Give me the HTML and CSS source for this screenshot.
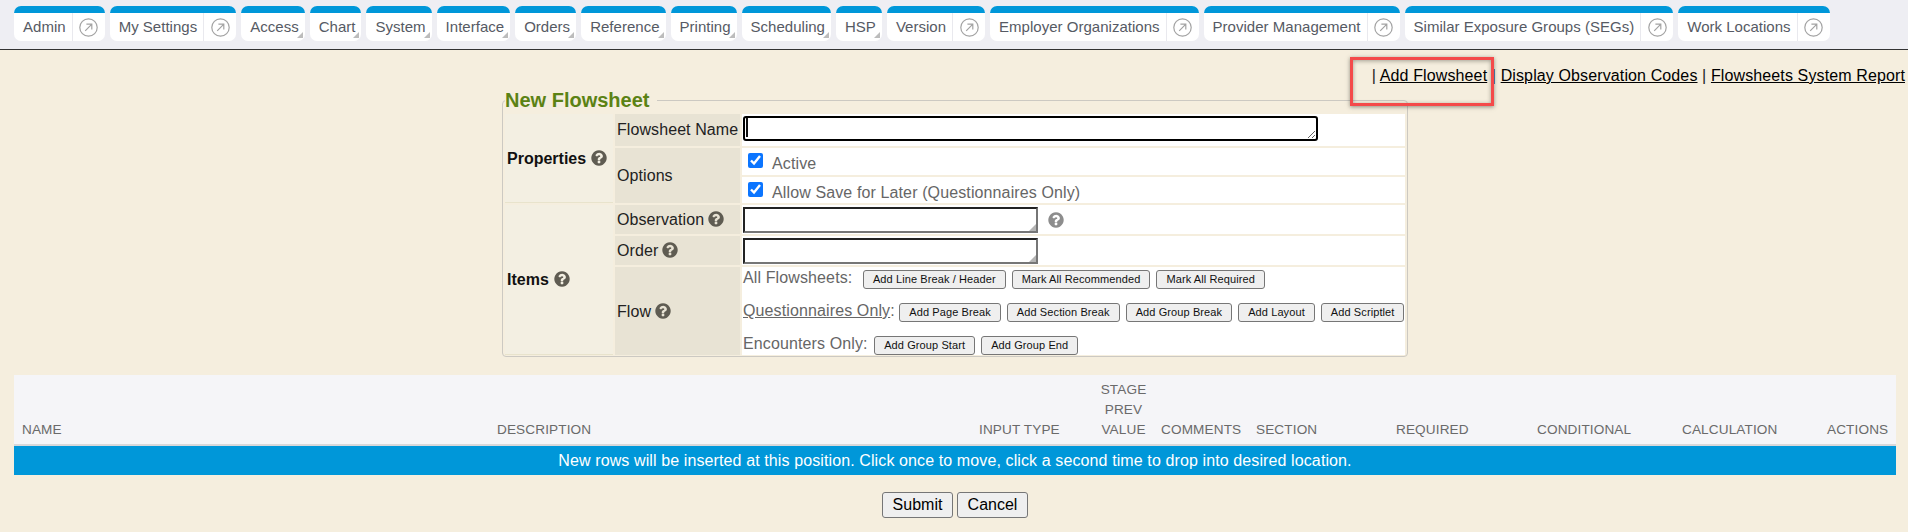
FILE: index.html
```html
<!DOCTYPE html>
<html lang="en">
<head>
<meta charset="utf-8">
<title>New Flowsheet</title>
<link rel="stylesheet" href="styles.css">
</head>
<body>
<svg class="defs" width="0" height="0" aria-hidden="true">
  <symbol id="ext" viewBox="0 0 19 19">
    <circle cx="9.5" cy="9.5" r="8.7" fill="none" stroke="currentColor" stroke-width="1.2"/>
    <path d="M6.2 12.8 12.6 6.4M7.4 6.2h5.4v5.4" fill="none" stroke="currentColor" stroke-width="1.2"/>
  </symbol>
  <symbol id="help" viewBox="0 0 1792 1792">
    <path fill="currentColor" d="M1024 1376v-192q0-14-9-23t-23-9h-192q-14 0-23 9t-9 23v192q0 14 9 23t23 9h192q14 0 23-9t9-23zm256-672q0-88-55.5-163t-138.5-116-170-41q-243 0-371 213-15 24 8 42l132 100q7 6 19 6 16 0 25-12 53-68 86-92 34-24 86-24 48 0 85.5 26t37.5 59q0 38-20 61t-68 45q-63 28-115.5 86.5t-52.5 125.5v36q0 14 9 23t23 9h192q14 0 23-9t9-23q0-19 21.5-49.5t54.5-49.5q32-18 49-28.5t46-35 44.5-48 28-60.5 12.5-81zm384 192q0 209-103 385.5t-279.5 279.5-385.5 103-385.5-103-279.5-279.5-103-385.5 103-385.5 279.5-279.5 385.5-103 385.5 103 279.5 279.5 103 385.5z"/>
  </symbol>
</svg>

<nav class="nav">
  <div class="tab"><span class="tab-label">Admin</span><span class="tab-ext"><svg class="ext-icon"><use href="#ext"/></svg></span></div>
  <div class="tab"><span class="tab-label">My Settings</span><span class="tab-ext"><svg class="ext-icon"><use href="#ext"/></svg></span></div>
  <div class="tab tab-menu"><span class="tab-label">Access</span></div>
  <div class="tab tab-menu"><span class="tab-label">Chart</span></div>
  <div class="tab tab-menu"><span class="tab-label">System</span></div>
  <div class="tab tab-menu"><span class="tab-label">Interface</span></div>
  <div class="tab tab-menu"><span class="tab-label">Orders</span></div>
  <div class="tab tab-menu"><span class="tab-label">Reference</span></div>
  <div class="tab tab-menu"><span class="tab-label">Printing</span></div>
  <div class="tab tab-menu"><span class="tab-label">Scheduling</span></div>
  <div class="tab tab-menu"><span class="tab-label">HSP</span></div>
  <div class="tab"><span class="tab-label">Version</span><span class="tab-ext"><svg class="ext-icon"><use href="#ext"/></svg></span></div>
  <div class="tab"><span class="tab-label">Employer Organizations</span><span class="tab-ext"><svg class="ext-icon"><use href="#ext"/></svg></span></div>
  <div class="tab"><span class="tab-label">Provider Management</span><span class="tab-ext"><svg class="ext-icon"><use href="#ext"/></svg></span></div>
  <div class="tab"><span class="tab-label">Similar Exposure Groups (SEGs)</span><span class="tab-ext"><svg class="ext-icon"><use href="#ext"/></svg></span></div>
  <div class="tab"><span class="tab-label">Work Locations</span><span class="tab-ext"><svg class="ext-icon"><use href="#ext"/></svg></span></div>
</nav>

<div class="links">
  <span class="highlighted">| <a href="#">Add Flowsheet</a></span>&nbsp;| <a href="#">Display Observation Codes</a> | <a href="#">Flowsheets System Report</a>
</div>

<fieldset class="form-set">
  <legend class="form-title">New Flowsheet</legend>
  <table class="form-table">
    <colgroup><col class="col-a"><col class="col-b"><col class="col-c"></colgroup>
    <tr class="r-name">
      <td class="group" rowspan="3">Properties <svg class="help"><use href="#help"/></svg></td>
      <td class="label">Flowsheet Name</td>
      <td class="field name-cell">
        <div class="name-wrap"><textarea class="name-input" aria-label="Flowsheet Name"></textarea><span class="caret"></span></div>
      </td>
    </tr>
    <tr class="r-opt1">
      <td class="label" rowspan="2">Options</td>
      <td class="field"><label class="check"><input type="checkbox" checked><span class="check-text">Active</span></label></td>
    </tr>
    <tr class="r-opt2">
      <td class="field"><label class="check"><input type="checkbox" checked><span class="check-text">Allow Save for Later (Questionnaires Only)</span></label></td>
    </tr>
    <tr class="r-box">
      <td class="group" rowspan="3">Items <svg class="help"><use href="#help"/></svg></td>
      <td class="label">Observation <svg class="help"><use href="#help"/></svg></td>
      <td class="field"><div class="box-row"><div class="box"></div><svg class="help help-light"><use href="#help"/></svg></div></td>
    </tr>
    <tr class="r-box">
      <td class="label">Order <svg class="help"><use href="#help"/></svg></td>
      <td class="field"><div class="box-row"><div class="box"></div></div></td>
    </tr>
    <tr class="r-flow">
      <td class="label">Flow <svg class="help"><use href="#help"/></svg></td>
      <td class="field flow">
        <div class="flow-row"><span>All Flowsheets:</span>
          <button class="mini first-all">Add Line Break / Header</button><button class="mini">Mark All Recommended</button><button class="mini">Mark All Required</button></div>
        <div class="flow-row"><span><u>Questionnaires Only</u>:</span>
          <button class="mini first-quest">Add Page Break</button><button class="mini">Add Section Break</button><button class="mini">Add Group Break</button><button class="mini">Add Layout</button><button class="mini">Add Scriptlet</button></div>
        <div class="flow-row"><span>Encounters Only:</span>
          <button class="mini first-enc">Add Group Start</button><button class="mini">Add Group End</button></div>
      </td>
    </tr>
  </table>
</fieldset>

<table class="rows">
  <colgroup>
    <col class="c1"><col class="c2"><col class="c3"><col class="c4"><col class="c5"><col class="c6"><col class="c7"><col class="c8"><col class="c9"><col class="c10">
  </colgroup>
  <thead>
    <tr>
      <th>NAME</th><th>DESCRIPTION</th><th>INPUT TYPE</th><th class="stack">STAGE<br>PREV<br>VALUE</th><th>COMMENTS</th><th>SECTION</th><th>REQUIRED</th><th>CONDITIONAL</th><th>CALCULATION</th><th>ACTIONS</th>
    </tr>
  </thead>
  <tbody>
    <tr><td class="insert" colspan="10">New rows will be inserted at this position. Click once to move, click a second time to drop into desired location.</td></tr>
  </tbody>
</table>

<div class="actions">
  <button class="action">Submit</button>
  <button class="action">Cancel</button>
</div>
</body>
</html>
```
FILE: styles.css
```css
* { box-sizing: border-box; }
html, body { margin: 0; height: 100%; }
body {
  background: #f5eede;
  font-family: "Liberation Sans", Arial, sans-serif;
  font-size: 16px;
  letter-spacing: .12px;
  color: #111;
  overflow: hidden;
}
.defs { position: absolute; }

/* nav */
.nav {
  display: flex;
  gap: 5px;
  height: 50px;
  padding: 6px 0 0 14px;
  background: #eeeef3;
  border-bottom: 1px solid #333;
}
.tab {
  position: relative;
  display: flex;
  align-items: center;
  height: 35px;
  padding-top: 7px;
  background: #fff;
  border-radius: 7px;
  overflow: hidden;
  font-size: 15px;
  letter-spacing: .02px;
  color: #565a64;
  white-space: nowrap;
}
.tab::before {
  content: "";
  position: absolute;
  left: 0; right: 0; top: 0;
  height: 7px;
  background: #0097d9;
}
.tab-label { padding: 0 6px 1px 9px; }
.tab-ext {
  display: flex;
  align-items: center;
  justify-content: center;
  width: 33px;
  height: 100%;
  border-left: 1px solid #e9e9ee;
}
.ext-icon { width: 19px; height: 19px; color: #a3a3a3; }
.tab-menu::after {
  content: "";
  position: absolute;
  right: 2px;
  bottom: 3px;
  width: 0; height: 0;
  border-style: solid;
  border-width: 0 0 6px 6px;
  border-color: transparent transparent #bcbcbc transparent;
}

/* links */
.links {
  height: 38px;
  padding: 17px 3px 0 0;
  line-height: 18px;
  text-align: right;
  color: #222;
  white-space: nowrap;
}
.links a { color: #000; text-decoration: underline; }
.highlighted { position: relative; }
.highlighted::after {
  content: "";
  position: absolute;
  left: -22px;
  right: -7px;
  top: -10px;
  height: 43px;
  border: 3px solid #f44a4a;
  box-shadow: 0 1px 4px rgba(60, 60, 50, .55), inset 0 1px 4px rgba(60, 60, 50, .45);
}

/* fieldset */
.form-set {
  width: 906px;
  margin: 0 0 0 502px;
  padding: 0;
  border: 1px solid #ccc9c2;
  border-radius: 4px;
}
.form-title {
  margin-left: 2px;
  padding: 0 8px 0 0;
  font-size: 20px;
  font-weight: bold;
  line-height: 24px;
  letter-spacing: 0;
  color: #5b8214;
}
.form-table {
  width: 904px;
  margin-bottom: -1px;
  table-layout: fixed;
  border-collapse: separate;
  border-spacing: 2px;
}
.col-a { width: 108px; }
.col-b { width: 125px; }
.r-name td { height: 32px; }
.r-opt1 td { height: 27px; }
.r-opt2 td { height: 26px; }
.r-box td { height: 29px; }
.r-flow td { height: 88px; }
.form-table td { padding: 0 0 0 2px; vertical-align: middle; white-space: nowrap; }
.form-table .group {
  background: #f3efe2;
  border-bottom: 1px solid #e8e3cc;
  font-weight: bold;
  letter-spacing: 0;
  color: #111;
}
.form-table .label { background: #e8e3d4; color: #222; letter-spacing: .08px; }
.form-table .field { background: #fff; padding-left: 1px; }
.form-table .name-cell { vertical-align: top; padding-top: 2px; }
.help { display: inline-block; width: 18px; height: 18px; vertical-align: -3px; color: #5f5c52; }
.label .help { margin-left: -1.5px; }
.group .help { margin-left: -.5px; }
.help-light { color: #8d8d8d; margin-left: 9px; }

.name-wrap { position: relative; height: 25px; width: 575px; }
.name-input {
  display: block;
  width: 575px;
  height: 25px;
  margin: 0;
  padding: 0;
  border: 2px solid #000;
  border-radius: 3px;
  outline: 0;
  background: #fff;
}
.caret {
  position: absolute;
  left: 3px;
  top: 2px;
  width: 2px;
  height: 19px;
  background: #111;
}
.form-table td.field:has(.check) { vertical-align: top; padding: 5px 0 0 6px; }
.check { display: flex; align-items: flex-start; color: #666; }
.check input { width: 15px; height: 15px; margin: 0 9px 0 0; accent-color: #0b75ff; }
.check-text { line-height: 18px; margin-top: 2px; }

.box-row { display: flex; align-items: center; }
.box {
  position: relative;
  width: 295px;
  height: 26px;
  background: #fff;
  border: 2px solid;
  border-color: #222 #767676 #767676 #222;
}
.box::after {
  content: "";
  position: absolute;
  right: 0;
  bottom: 0;
  border-style: solid;
  border-width: 0 0 7px 7px;
  border-color: transparent transparent #b5b5b5 transparent;
}

.form-table td.flow { padding: 1px 0 0 1px; vertical-align: top; color: #666; }
.flow-row {
  display: flex;
  align-items: baseline;
  height: 33px;
  line-height: 20px;
}
.flow-row:last-child { height: 21px; }
.mini {
  height: 19px;
  margin: 0 0 0 6px;
  padding: 0 9px;
  font-family: inherit;
  font-size: 11px;
  line-height: 15px;
  letter-spacing: .1px;
  color: #111;
  background: #efefef;
  border: 1px solid #767676;
  border-radius: 3px;
}
.mini.first-all { margin-left: 10.5px; }
.mini.first-quest { margin-left: 4.5px; }
.mini.first-enc { margin-left: 6.5px; }

/* rows table */
.rows {
  width: 1882px;
  margin: 18px 0 0 14px;
  table-layout: fixed;
  border-collapse: collapse;
}
.c1 { width: 475px; }
.c2 { width: 482px; }
.c3 { width: 123px; }
.c4 { width: 59px; }
.c5 { width: 95px; }
.c6 { width: 140px; }
.c7 { width: 141px; }
.c8 { width: 145px; }
.c9 { width: 145px; }
.c10 { width: 77px; }
.rows th {
  height: 70px;
  padding: 4px 8px;
  background: #f5f5f8;
  border-bottom: 2px solid #d8d8da;
  font-size: 13.6px;
  font-weight: normal;
  line-height: 20px;
  color: #6a6a6a;
  text-align: left;
  vertical-align: bottom;
  white-space: nowrap;
}
.rows th.stack { padding-left: 0; padding-right: 0; text-align: center; }
.insert {
  height: 30px;
  padding: 0;
  background: #0097d9;
  color: #fff;
  text-align: center;
  font-size: 16px;
  letter-spacing: .11px;
}

/* actions */
.actions {
  display: flex;
  justify-content: center;
  gap: 4px;
  margin: 17px 0 0 2px;
}
.action {
  width: 71px;
  height: 26px;
  padding: 0;
  font-family: inherit;
  font-size: 16px;
  color: #000;
  background: #efefef;
  border: 1px solid #767676;
  border-radius: 3px;
}
```
